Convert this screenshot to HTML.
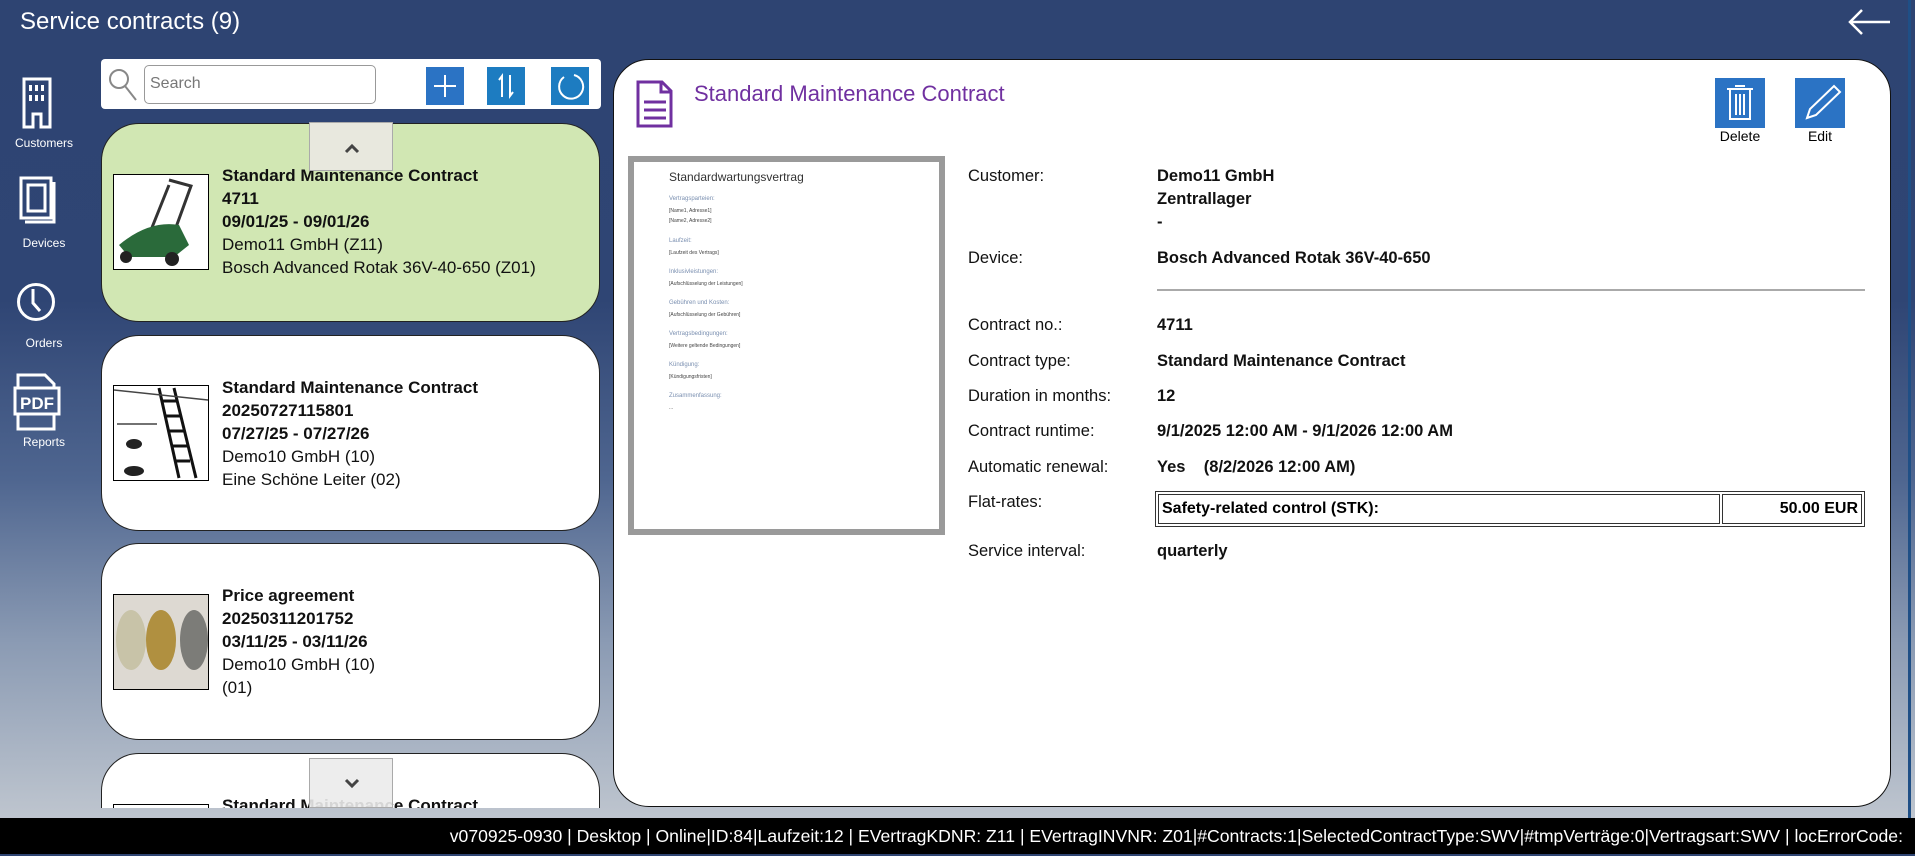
<!DOCTYPE html>
<html><head><meta charset="utf-8"><style>
*{margin:0;padding:0;box-sizing:border-box}
html,body{width:1915px;height:856px;overflow:hidden}
body{position:relative;font-family:"Liberation Sans",sans-serif;
background:linear-gradient(180deg,#2e4472 0px,#2f4574 300px,#4f6690 480px,#8a9ab3 640px,#b9c1cc 800px,#c8ccd2 856px);}
.a{position:absolute}
.t{color:#fff;font-size:24px;left:20px;top:8px}
.side{color:#fff;font-size:12px;text-align:center;width:70px;left:9px}
.card{position:absolute;left:101px;width:499px;border:1.5px solid #222;border-radius:38px;background:#fff;overflow:hidden}
.card .img{position:absolute;left:11px;width:96px;height:96px;border:1.5px solid #000;background:#fff}
.card .tx{position:absolute;left:120px;font-size:17px;line-height:23px;color:#111}
b{font-weight:bold}
.btn{position:absolute;top:67px;width:38px;height:38px;background:#2b73c4}
.lbl{position:absolute;left:968px;font-size:16.5px;color:#111}
.val{position:absolute;left:1157px;font-size:16.5px;font-weight:bold;color:#111}
.pv{font-size:6px;color:#7a8fb0;position:absolute;left:35px}
.pv2{font-size:5px;color:#444;position:absolute;left:35px}
</style></head><body>
<div class="a t">Service contracts (9)</div>
<svg class="a" style="left:1846px;top:8px" width="46" height="30" viewBox="0 0 46 30"><path d="M44 14H4M16 2L4 14 16 26" stroke="#fff" stroke-width="2.5" fill="none"/></svg>
<div class="a" style="left:1908px;top:0;width:3px;height:818px;background:#1f4f86"></div>

<!-- sidebar -->
<svg class="a" style="left:22px;top:77px" width="30" height="52" viewBox="0 0 30 52"><path d="M2 2h26v48h-9V37h-8v13H2z" fill="none" stroke="#fff" stroke-width="3"/><g fill="#fff"><rect x="7" y="8" width="3" height="6"/><rect x="13" y="8" width="3" height="6"/><rect x="19" y="8" width="3" height="6"/><rect x="7" y="18" width="3" height="6"/><rect x="13" y="18" width="3" height="6"/><rect x="19" y="18" width="3" height="6"/></g></svg>
<div class="a side" style="top:136px">Customers</div>
<svg class="a" style="left:19px;top:176px" width="40" height="52" viewBox="0 0 40 52"><rect x="2" y="2" width="30" height="40" fill="none" stroke="#fff" stroke-width="3"/><rect x="9" y="9" width="17" height="26" fill="none" stroke="#fff" stroke-width="3"/><path d="M35 6v40H6" fill="none" stroke="#fff" stroke-width="3"/></svg>
<div class="a side" style="top:236px">Devices</div>
<svg class="a" style="left:16px;top:279px" width="40" height="46" viewBox="0 0 40 46"><circle cx="20" cy="23" r="17.5" fill="none" stroke="#fff" stroke-width="3"/><path d="M17 10v14l7 8" fill="none" stroke="#fff" stroke-width="3"/></svg>
<div class="a side" style="top:336px">Orders</div>
<svg class="a" style="left:13px;top:373px" width="48" height="58" viewBox="0 0 48 58"><path d="M5 14V2h27l9 9v3M5 42v14h36V42" fill="none" stroke="#fff" stroke-width="3"/><rect x="2" y="15" width="44" height="26" fill="none" stroke="#fff" stroke-width="3"/><text x="24" y="36" fill="#fff" font-size="17" font-weight="bold" text-anchor="middle" font-family="Liberation Sans">PDF</text></svg>
<div class="a side" style="top:435px">Reports</div>

<!-- search bar -->
<div class="a" style="left:101px;top:59px;width:500px;height:50px;background:#fff;border-radius:4px"></div>
<svg class="a" style="left:108px;top:67px" width="30" height="36" viewBox="0 0 30 36"><circle cx="11" cy="12" r="9" fill="none" stroke="#888" stroke-width="2"/><path d="M17 19l11 14" stroke="#888" stroke-width="2"/></svg>
<div class="a" style="left:144px;top:65px;width:232px;height:39px;border:1px solid #999;border-radius:5px;color:#777;font-size:16px;padding:9px 5px">Search</div>
<div class="btn" style="left:426px"><svg width="38" height="38"><path d="M19 8v22M8 19h22" stroke="#fff" stroke-width="2"/></svg></div>
<div class="btn" style="left:487px;background:#1d7cc1"><svg width="38" height="38"><path d="M15 30V9l-3 4M23 8v21l3-4" stroke="#fff" stroke-width="2" fill="none"/></svg></div>
<div class="btn" style="left:551px;background:#1d7cc1"><svg width="38" height="38"><path d="M13 10A12 12 0 1 0 23 8" stroke="#fff" stroke-width="2" fill="none"/></svg></div>

<!-- cards -->
<div class="a" style="left:101px;top:120px;width:500px;height:688px;overflow:hidden">
<div class="card" style="left:0;top:3px;height:199px;background:#d1e7b3"><div class="img" style="top:50px"><svg width="94" height="94"><path d="M55 5l22 6-20 55M35 60l20-50" stroke="#333" stroke-width="3" fill="none"/><path d="M5 70q30-25 60-20l10 20-15 12H15z" fill="#2a6a3a"/><circle cx="12" cy="82" r="6" fill="#222"/><circle cx="58" cy="84" r="7" fill="#222"/></svg></div>
<div class="tx" style="top:40px"><b>Standard Maintenance Contract</b><br><b>4711</b><br><b>09/01/25 - 09/01/26</b><br>Demo11 GmbH (Z11)<br>Bosch Advanced Rotak 36V-40-650 (Z01)</div></div>
<div class="card" style="left:0;top:215px;height:196px"><div class="img" style="top:49px"><svg width="94" height="94"><path d="M45 2l20 90M60 2l22 90M48 15h16M51 30h16M54 45h16M57 60h16M60 75h16" stroke="#111" stroke-width="3"/><path d="M0 4l94 10M3 38h40" stroke="#444" stroke-width="1.5"/><ellipse cx="20" cy="58" rx="8" ry="5" fill="#222"/><ellipse cx="20" cy="85" rx="10" ry="5" fill="#222"/></svg></div>
<div class="tx" style="top:40px"><b>Standard Maintenance Contract</b><br><b>20250727115801</b><br><b>07/27/25 - 07/27/26</b><br>Demo10 GmbH (10)<br>Eine Schöne Leiter (02)</div></div>
<div class="card" style="left:0;top:423px;height:197px"><div class="img" style="top:50px;background:#ddd9d2"><svg width="94" height="94"><ellipse cx="17" cy="45" rx="15" ry="30" fill="#c8c3a8"/><ellipse cx="47" cy="45" rx="15" ry="30" fill="#b09040"/><ellipse cx="80" cy="45" rx="14" ry="30" fill="#7c7c78"/></svg></div>
<div class="tx" style="top:40px"><b>Price agreement</b><br><b>20250311201752</b><br><b>03/11/25 - 03/11/26</b><br>Demo10 GmbH (10)<br>(01)</div></div>
<div class="card" style="left:0;top:633px;height:100px"><div class="img" style="top:50px"></div><div class="tx" style="top:40px"><b>Standard Maintenance Contract</b></div></div>
</div>
<div class="a" style="left:309px;top:122px;width:84px;height:49px;background:#e8e8de;border:1px solid #aaa"><svg width="84" height="49"><path d="M36 29l6-6 6 6" stroke="#444" stroke-width="3" fill="none"/></svg></div>
<div class="a" style="left:309px;top:758px;width:84px;height:50px;background:rgba(235,235,235,.9);border:1px solid #aaa"><svg width="84" height="49"><path d="M36 21l6 6 6-6" stroke="#444" stroke-width="3" fill="none"/></svg></div>

<!-- right panel -->
<div class="a" style="left:613px;top:59px;width:1278px;height:748px;background:#fff;border:1.5px solid #111;border-radius:36px"></div>
<svg class="a" style="left:636px;top:80px" width="38" height="48" viewBox="0 0 38 48"><path d="M2 2h24l9 9v35H2z" fill="none" stroke="#7030a0" stroke-width="3"/><path d="M25 2v10h10M8 22h22M8 30h22M8 38h22" stroke="#7030a0" stroke-width="3" fill="none"/></svg>
<div class="a" style="left:694px;top:81px;font-size:22px;color:#7030a0">Standard Maintenance Contract</div>
<div class="a" style="left:1715px;top:78px;width:50px;height:50px;background:#2b73c4"><svg width="50" height="50"><path d="M12 11h26M20 8h10M15 12v29h20V12M21 16v21M25 16v21M29 16v21" stroke="#fff" stroke-width="2" fill="none"/></svg></div>
<div class="a" style="left:1795px;top:78px;width:50px;height:50px;background:#2b73c4"><svg width="50" height="50"><path d="M12 40l3-9 24-23 6 6-24 23z" stroke="#fff" stroke-width="2" fill="none"/></svg></div>
<div class="a" style="left:1715px;top:128px;width:50px;text-align:center;font-size:14px">Delete</div>
<div class="a" style="left:1795px;top:128px;width:50px;text-align:center;font-size:14px">Edit</div>

<div class="a" style="left:628px;top:156px;width:317px;height:379px;border:6px solid #9a9a9a;background:#fff">
<div class="a" style="left:35px;top:8px;font-size:12px;color:#333">Standardwartungsvertrag</div>
<div class="pv" style="top:34px">Vertragsparteien:</div><div class="pv2" style="top:46px">[Name1, Adresse1]</div><div class="pv2" style="top:56px">[Name2, Adresse2]</div>
<div class="pv" style="top:76px">Laufzeit:</div><div class="pv2" style="top:88px">[Laufzeit des Vertrags]</div>
<div class="pv" style="top:107px">Inklusivleistungen:</div><div class="pv2" style="top:119px">[Aufschlüsselung der Leistungen]</div>
<div class="pv" style="top:138px">Gebühren und Kosten:</div><div class="pv2" style="top:150px">[Aufschlüsselung der Gebühren]</div>
<div class="pv" style="top:169px">Vertragsbedingungen:</div><div class="pv2" style="top:181px">[Weitere geltende Bedingungen]</div>
<div class="pv" style="top:200px">Kündigung:</div><div class="pv2" style="top:212px">[Kündigungsfristen]</div>
<div class="pv" style="top:231px">Zusammenfassung:</div><div class="pv2" style="top:243px">...</div>
</div>

<div class="lbl" style="top:167px">Customer:</div>
<div class="val" style="top:167px">Demo11 GmbH</div>
<div class="val" style="top:190px">Zentrallager</div>
<div class="val" style="top:213px">-</div>
<div class="lbl" style="top:249px">Device:</div>
<div class="val" style="top:249px">Bosch Advanced Rotak 36V-40-650</div>
<div class="a" style="left:1157px;top:289px;width:708px;height:2px;background:#aaa"></div>
<div class="lbl" style="top:316px">Contract no.:</div><div class="val" style="top:316px">4711</div>
<div class="lbl" style="top:352px">Contract type:</div><div class="val" style="top:352px">Standard Maintenance Contract</div>
<div class="lbl" style="top:387px">Duration in months:</div><div class="val" style="top:387px">12</div>
<div class="lbl" style="top:422px">Contract runtime:</div><div class="val" style="top:422px">9/1/2025 12:00 AM - 9/1/2026 12:00 AM</div>
<div class="lbl" style="top:458px">Automatic renewal:</div><div class="val" style="top:458px">Yes &nbsp;&nbsp; (8/2/2026 12:00 AM)</div>
<div class="lbl" style="top:493px">Flat-rates:</div>
<div class="a" style="left:1155px;top:491px;width:710px;height:36px;border:1px solid #333;padding:2px;display:flex;gap:2px">
<div style="flex:1;border:1px solid #333;font-weight:bold;font-size:16px;padding:5px 3px">Safety-related control (STK):</div>
<div style="width:140px;border:1px solid #333;font-weight:bold;font-size:16px;padding:5px 3px;text-align:right">50.00 EUR</div></div>
<div class="lbl" style="top:542px">Service interval:</div><div class="val" style="top:542px">quarterly</div>

<!-- bottom bar -->
<div class="a" style="left:0;top:818px;width:1915px;height:36px;background:#000;color:#fff;font-size:17.6px;white-space:nowrap;overflow:hidden">
<div class="a" style="right:12px;top:8px">v070925-0930 | Desktop | Online|ID:84|Laufzeit:12 | EVertragKDNR: Z11 | EVertragINVNR: Z01|#Contracts:1|SelectedContractType:SWV|#tmpVerträge:0|Vertragsart:SWV | locErrorCode:</div></div>
<div class="a" style="left:0;top:854px;width:1915px;height:2px;background:#2e4472"></div>
</body></html>
